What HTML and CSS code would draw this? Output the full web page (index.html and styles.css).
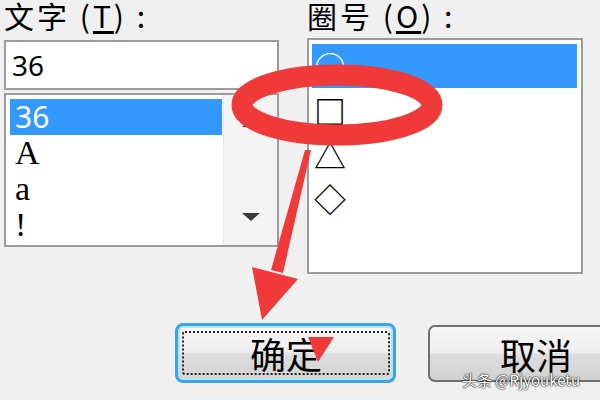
FILE: index.html
```html
<!DOCTYPE html>
<html lang="zh-CN">
<head>
    <meta charset="UTF-8">
    <meta name="viewport" content="width=device-width, initial-scale=1.0">
    <title>带圈字符</title>
    <link rel="stylesheet" href="styles.css">
</head>
<body>
    <div class="dialog">
        <div class="panes">
            <div class="column column-left">
                <div class="label">文字 (<u>T</u>) :</div>
                <div class="text-input">36</div>
                <div class="char-list">
                    <div class="char-items">
                        <div class="char-item selected">36</div>
                        <div class="char-item serif">A</div>
                        <div class="char-item serif">a</div>
                        <div class="char-item serif">!</div>
                    </div>
                    <div class="scrollbar">
                        <span class="arrow-up"></span>
                        <span class="arrow-down"></span>
                    </div>
                </div>
            </div>
            <div class="column column-right">
                <div class="label">圈号 (<u>O</u>) :</div>
                <div class="symbol-list">
                    <div class="symbol-item selected">○</div>
                    <div class="symbol-item square">□</div>
                    <div class="symbol-item">△</div>
                    <div class="symbol-item">◇</div>
                </div>
            </div>
        </div>

        <div class="buttons">
            <button class="btn btn-ok"><span class="focus-ring">确定</span></button>
            <button class="btn btn-cancel">取消</button>
        </div>
    </div>

    <!-- red annotation drawn over the dialog -->
    <svg class="markup" width="600" height="400" viewBox="0 0 600 400">
        <ellipse cx="337" cy="105" rx="95" ry="30" fill="none" stroke="#f03a3a" stroke-width="21"/>
        <polygon points="305,150 311,150 283,273 271,270" fill="#f03a3a"/>
        <polygon points="252,267 298,279 262,320" fill="#f03a3a"/>
        <polygon points="308,337 334,337 318,362" fill="#f03a3a"/>
    </svg>

    <div class="watermark">头条 @Rjyouketu</div>
</body>
</html>
```

FILE: styles.css
```css
/* Global */
body {
    margin: 0;
    width: 600px;
    height: 400px;
    overflow: hidden;
    position: relative;
    background: #f0f0f0;
    color: #000;
    font-family: "Noto Sans CJK SC", "Noto Sans", sans-serif;
}

.dialog {
    padding-left: 4px;
}

.panes {
    display: flex;
    gap: 28px;
}

.column-left {
    width: 275px;
}

.column-right {
    width: 276px;
}

.label {
    height: 30px;
    font-size: 30px;
    line-height: 31px;
    letter-spacing: 3px;
    white-space: nowrap;
}

.label u {
    text-underline-offset: 3px;
}

/* Text box */
.text-input {
    margin-top: 10px;
    height: 50px;
    box-sizing: border-box;
    border: 2px solid #9c9c9c;
    background: #fff;
    padding-left: 6px;
    font-family: "Noto Sans", sans-serif;
    font-size: 28px;
    line-height: 46px;
}

/* Character list */
.char-list {
    margin-top: 3px;
    height: 154px;
    box-sizing: border-box;
    border: 2px solid #9c9c9c;
    background: #fff;
    display: flex;
}

.char-items {
    flex: 1;
    padding: 4px 1px 4px 4px;
}

.char-item {
    height: 36px;
    line-height: 36px;
    padding-left: 5px;
    font-family: "Noto Sans", sans-serif;
    font-size: 30px;
}

.char-item.serif {
    font-family: "Liberation Serif", serif;
    font-size: 34px;
}

.selected {
    background: #3399ff;
    color: #fff;
}

.scrollbar {
    width: 54px;
    box-sizing: border-box;
    background: #f3f3f3;
    border-left: 1px solid #e4e4e4;
    display: flex;
    flex-direction: column;
    align-items: center;
    justify-content: space-between;
    padding: 24px 0;
}

.arrow-up,
.arrow-down {
    width: 0;
    height: 0;
    border-left: 9px solid transparent;
    border-right: 9px solid transparent;
}

.arrow-up {
    border-bottom: 8px solid #3a3a3a;
}

.arrow-down {
    border-top: 8px solid #3a3a3a;
}

/* Symbol list */
.symbol-list {
    margin-top: 8px;
    height: 236px;
    box-sizing: border-box;
    border: 2px solid #9c9c9c;
    background: #fff;
    padding: 4px 4px 4px 3px;
}

.symbol-item {
    height: 44px;
    line-height: 44px;
    padding-left: 2px;
    font-size: 32px;
}

.symbol-item.square {
    font-weight: 700;
}

/* Buttons */
.buttons {
    display: flex;
    align-items: flex-start;
    gap: 32px;
    margin-top: 49px;
    padding-left: 171px;
}

.btn {
    flex: none;
    font-family: "Noto Sans CJK SC", sans-serif;
    font-size: 36px;
    color: #000;
    background: linear-gradient(#f6f6f6 0%, #eeeeee 48%, #dddddd 52%, #d2d2d2 100%);
    padding: 0;
    box-sizing: border-box;
}

.btn-ok {
    width: 221px;
    height: 60px;
    border: 3px solid #3aa5e6;
    border-radius: 8px;
    box-shadow: inset 0 0 0 2px #b9e3f8;
    display: flex;
}

.focus-ring {
    flex: 1;
    margin: 5px 3px 5px 4px;
    border: 2px dotted #222;
    border-radius: 3px;
    display: flex;
    align-items: center;
    justify-content: center;
    line-height: 1;
}

.btn-cancel {
    width: 216px;
    height: 57px;
    margin-top: 2px;
    border: 2px solid #707070;
    border-radius: 7px;
    line-height: 1;
}

/* Annotation layer */
.markup {
    position: absolute;
    left: 0;
    top: 0;
    pointer-events: none;
}

.watermark {
    position: absolute;
    left: 462px;
    top: 371px;
    font-size: 15px;
    line-height: 18px;
    color: #fff;
    text-shadow: 0 0 2px #000, 0 0 1px #000;
    white-space: nowrap;
}
```
